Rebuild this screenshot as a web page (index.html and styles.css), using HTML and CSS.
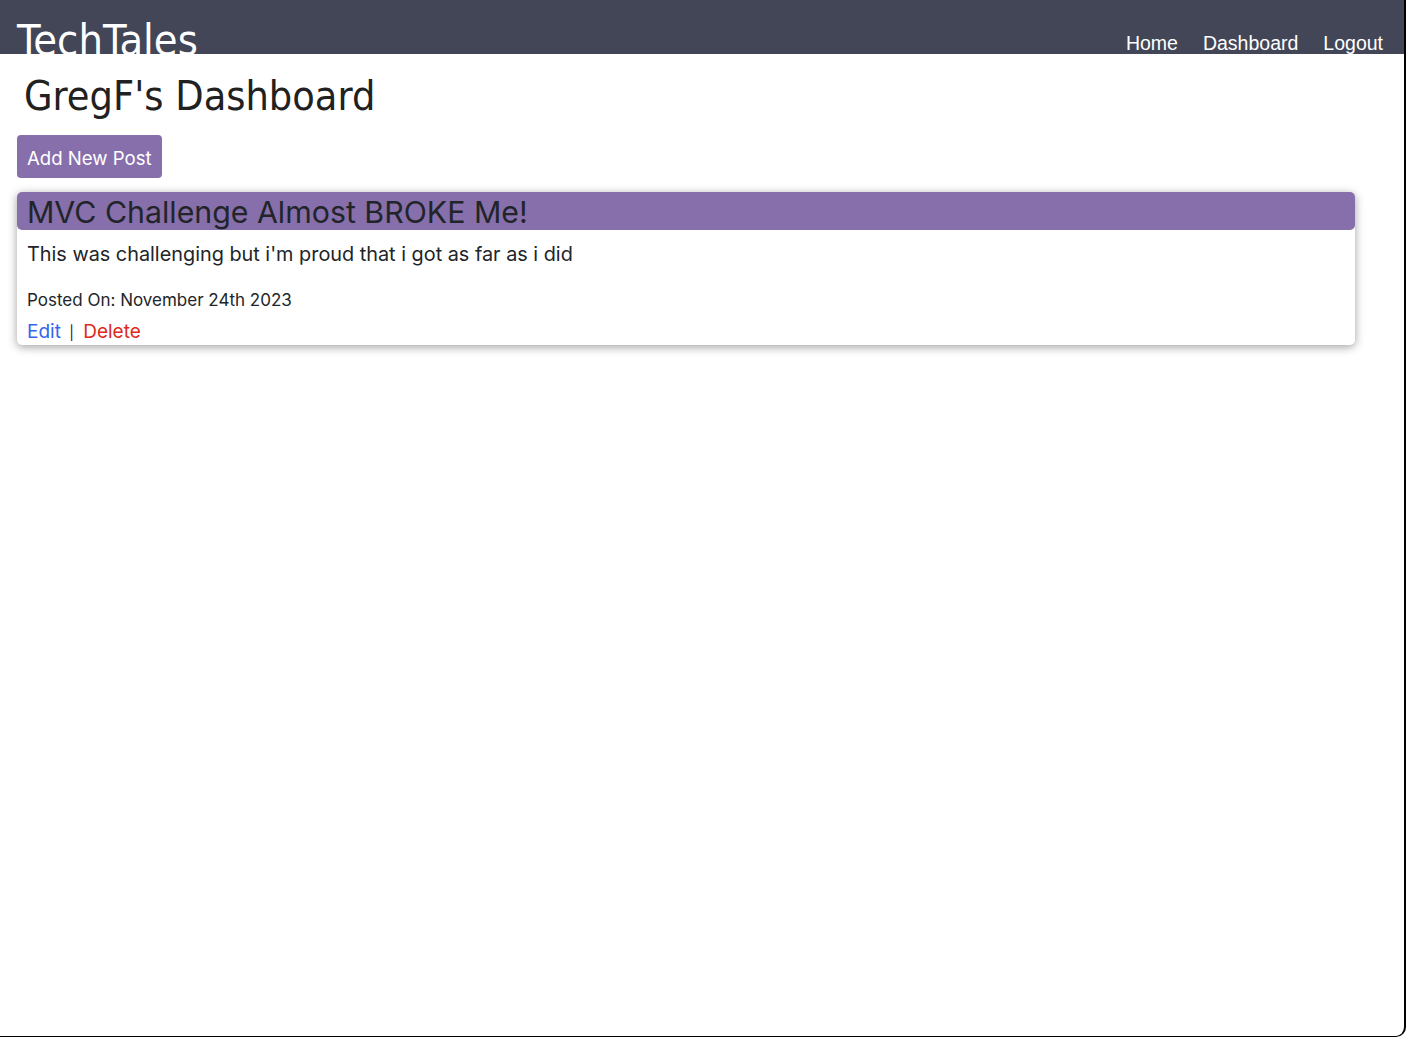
FILE: index.html
```html
<!DOCTYPE html>
<html lang="en">
<head>
<meta charset="utf-8">
<title>TechTales - Dashboard</title>
<link rel="stylesheet" href="styles.css">
</head>
<body>
<div class="window">
  <header class="topbar">
    <a class="brand" href="#">TechTales</a>
    <nav class="nav">
      <a href="#">Home</a>
      <a href="#">Dashboard</a>
      <a href="#">Logout</a>
    </nav>
  </header>
  <main class="content">
    <h1 class="page-title">GregF's Dashboard</h1>
    <button class="btn-add" type="button">Add New Post</button>
    <article class="post-card">
      <h2 class="post-title">MVC Challenge Almost BROKE Me!</h2>
      <div class="post-body">
        <p class="post-text">This was challenging but i'm proud that i got as far as i did</p>
        <p class="post-date">Posted On: November 24th 2023</p>
        <div class="post-actions">
          <a class="edit" href="#">Edit</a>
          <span class="sep">|</span>
          <a class="delete" href="#">Delete</a>
        </div>
      </div>
    </article>
  </main>
</div>
<div class="frame"></div>
</body>
</html>
```

FILE: styles.css
```css
html, body {
  margin: 0;
  padding: 0;
  background: #ffffff;
}
body {
  font-family: Inter, "Liberation Sans", sans-serif;
  color: #212529;
}
.window {
  width: 1404px;
  min-height: 1037px;
}
.topbar {
  height: 54px;
  background: #424656;
  display: flex;
  justify-content: space-between;
  align-items: flex-end;
}
.brand {
  font-family: "DejaVu Sans", sans-serif;
  font-stretch: condensed;
  font-size: 43px;
  color: #ffffff;
  text-decoration: none;
  line-height: 1;
  margin-left: 17px;
  margin-bottom: -8px;
}
.nav {
  display: flex;
  gap: 25px;
  margin-right: 21px;
  margin-bottom: 1px;
}
.nav a {
  font-family: "Liberation Sans", sans-serif;
  font-size: 19.5px;
  color: #ffffff;
  text-decoration: none;
  line-height: 1;
}
.content {
  padding: 0 17px;
}
.page-title {
  font-family: "DejaVu Sans", sans-serif;
  font-stretch: condensed;
  font-weight: 400;
  font-size: 41px;
  margin: 0;
  padding: 18px 0 0 7px;
  line-height: 48px;
  color: #212121;
}
.btn-add {
  margin-top: 15px;
  height: 43px;
  padding: 2px 10px 0;
  border: none;
  border-radius: 4px;
  background: #876fab;
  color: #ffffff;
  font-family: Inter, "Liberation Sans", sans-serif;
  font-size: 18.6px;
  cursor: pointer;
  display: block;
}
.post-card {
  margin-top: 14px;
  width: 1338px;
  border-radius: 5px;
  box-shadow: 0 2px 10px rgba(0, 0, 0, 0.38);
  background: #ffffff;
}
.post-title {
  margin: 0;
  background: #876fab;
  border-radius: 5px;
  height: 38px;
  line-height: 40px;
  padding: 0 10px;
  font-size: 30.3px;
  font-weight: 400;
  color: #212529;
}
.post-body {
  padding: 8px 10px 0;
}
.post-text {
  margin: 0;
  font-size: 19.85px;
  line-height: 32px;
}
.post-date {
  margin: 18px 0 0;
  font-size: 17px;
  line-height: 24px;
}
.post-actions {
  margin-top: 7px;
  font-size: 19px;
  line-height: 25px;
}
.edit {
  color: #3366ee;
  text-decoration: none;
}
.delete {
  color: #dd2a1a;
  text-decoration: none;
}
.sep {
  font-size: 14px;
  margin: 0 4px 0 3px;
  color: #222;
}
.frame {
  position: fixed;
  inset: 0;
  border-right: 2px solid #000;
  border-bottom: 1px solid #000;
  border-bottom-right-radius: 10px;
  pointer-events: none;
}
```
